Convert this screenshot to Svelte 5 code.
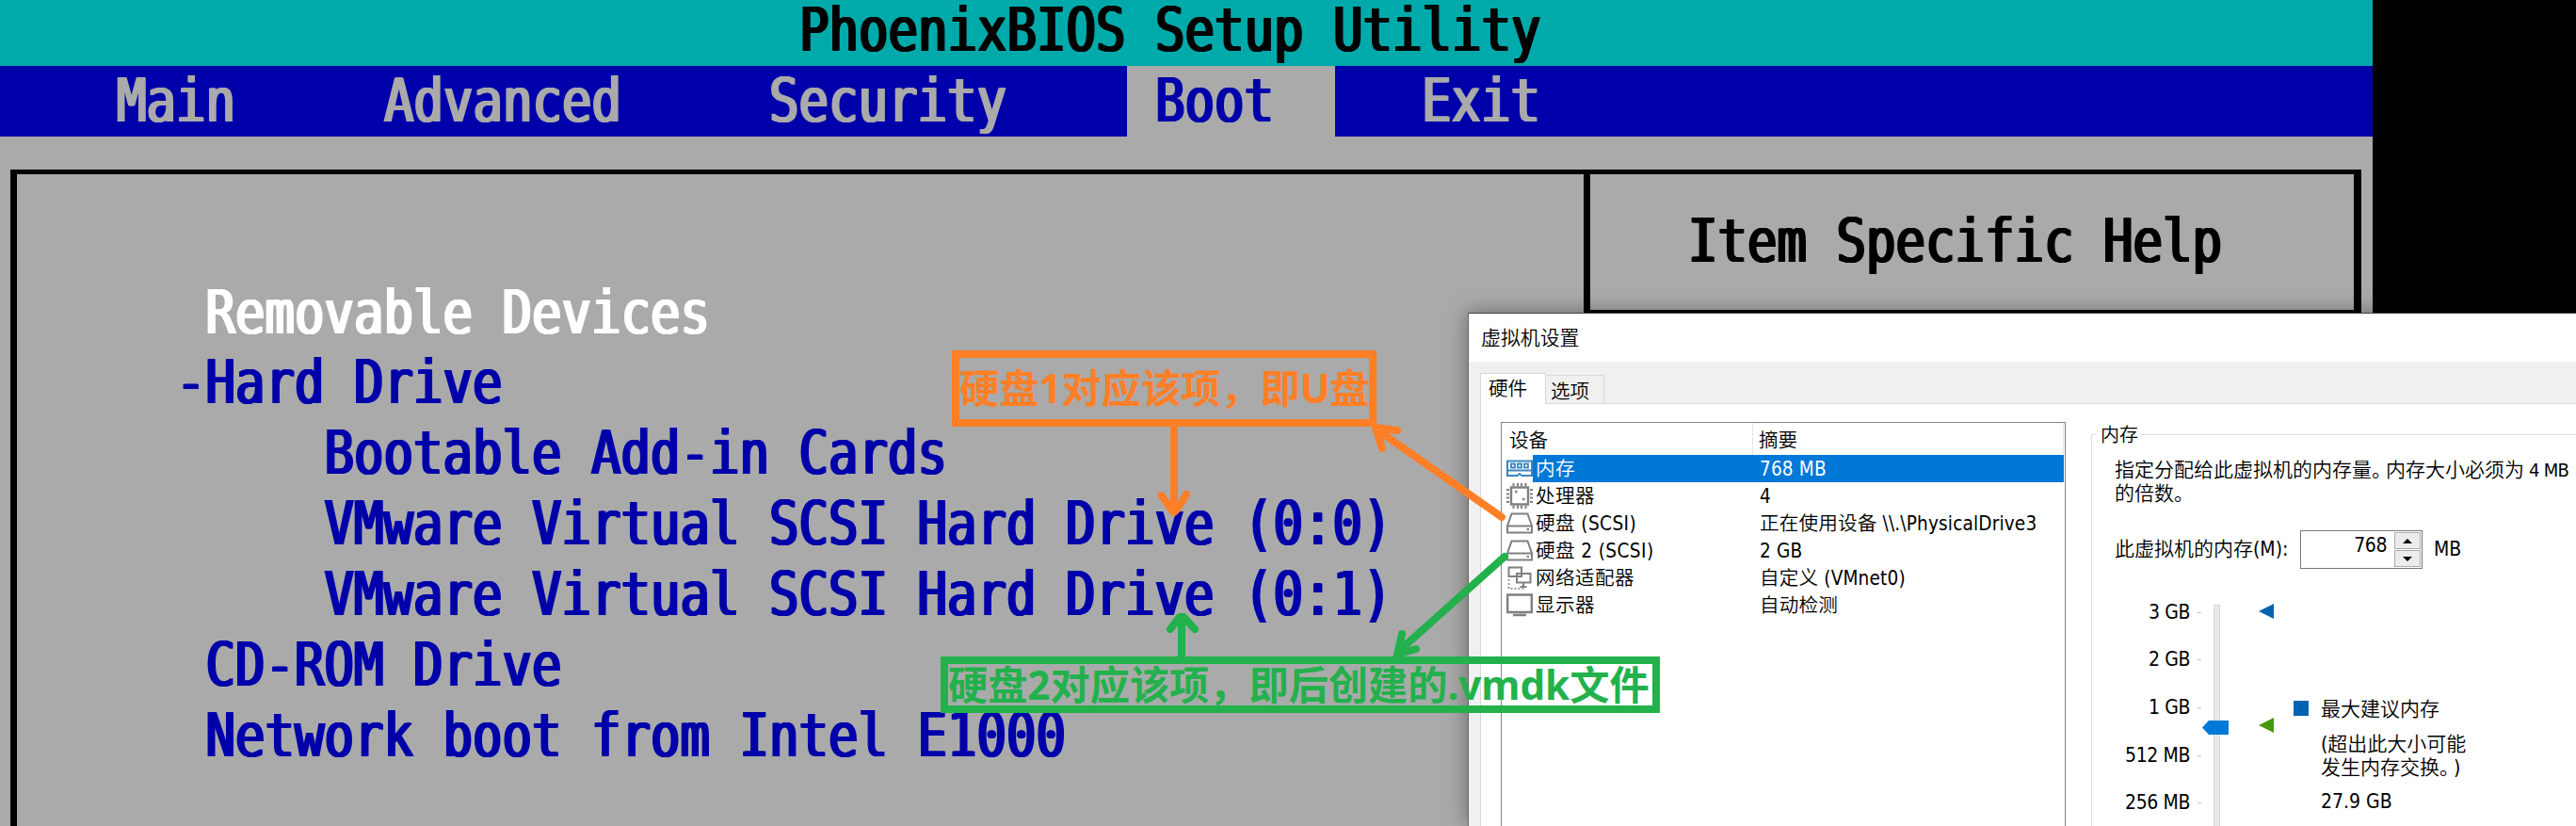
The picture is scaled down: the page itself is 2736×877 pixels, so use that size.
<script>
  const menu = [
    { label: 'Main', left: 4, width: 13 },
    { label: 'Advanced', left: 0, width: 13 },
    { label: 'Security', left: 0, width: 12 },
    { label: 'Boot', left: 1, width: 7, active: true },
    { label: 'Exit', left: 3, width: 10 }
  ];
  const boot = [
    { text: ' Removable Devices', on: true },
    { text: '-Hard Drive' },
    { text: '     Bootable Add-in Cards' },
    { text: '     VMware Virtual SCSI Hard Drive (0:0)' },
    { text: '     VMware Virtual SCSI Hard Drive (0:1)' },
    { text: ' CD-ROM Drive' },
    { text: ' Network boot from Intel E1000' }
  ];
  const devices = [
    { icon: 'mem', name: '内存', info: '768 MB', on: true },
    { icon: 'cpu', name: '处理器', info: '4' },
    { icon: 'disk', name: '硬盘 (SCSI)', info: '正在使用设备 \\\\.\\PhysicalDrive3' },
    { icon: 'disk', name: '硬盘 2 (SCSI)', info: '2 GB' },
    { icon: 'net', name: '网络适配器', info: '自定义 (VMnet0)' },
    { icon: 'mon', name: '显示器', info: '自动检测' }
  ];
  const scale = ['3 GB', '2 GB', '1 GB', '512 MB', '256 MB'];
</script>

<div class="stage">
  <div class="bios">
    <header><span class="t">PhoenixBIOS Setup Utility</span></header>
    <nav>
      {#each menu as m}
        <div class="item" class:active={m.active} style="width:{m.width * 31.5}px;padding-left:{m.left * 31.5}px">
          <span class="t">{m.label}</span>
        </div>
      {/each}
    </nav>
    <div class="frame">
      <div class="list">
        {#each boot as b}
          <div class="t" class:on={b.on}>{b.text}</div>
        {/each}
      </div>
      <div class="help"><div class="helphead"><span class="t">Item Specific Help</span></div></div>
    </div>
  </div>

  <section class="dialog">
    <div class="title">虚拟机设置</div>
    <div class="tabs">
      <div class="tab cur">硬件</div>
      <div class="tab">选项</div>
      <div class="rest"></div>
    </div>
    <div class="pane">
      <div class="table">
        <div class="thead"><span>设备</span><span>摘要</span></div>
        {#each devices as d}
          <div class="row" class:sel={d.on}>
            <svg class="ico" viewBox="0 0 28 29" fill="none" stroke="#808080" stroke-width="2">
              {#if d.icon === 'mem'}
                <g stroke="#3c85bd"><path d="M1 6.500H27V16.500H1ZM1 16.500V22H11.500L14 20L16.500 22H27V16.500" /><path d="M5 9.500H9V13.500H5ZM12 9.500H16V13.500H12ZM19 9.500H23V13.500H19Z" stroke-width="1.800" /></g>
              {:else if d.icon === 'cpu'}
                <path d="M5 5.500H23V23.500H5Z" stroke-width="2.400" />
                <path d="M7.500 1V4M12 1V4M16 1V4M20.500 1V4M7.500 25V28M12 25V28M16 25V28M20.500 25V28M0 8H3M0 12.500H3M0 16.500H3M0 21H3M25 8H28M25 12.500H28M25 16.500H28M25 21H28" />
                <path d="M9 10H11.500M17 18H19.500" stroke-width="2.600" />
              {:else if d.icon === 'disk'}
                <path d="M5.500 4.500H22.500L27 17.500V24.500H1V17.500ZM1 17.500H27M21.500 21H24" />
              {:else if d.icon === 'net'}
                <path d="M2.500 3.500H16V13H2.500ZM11 10H25.500V19.500H11ZM18 20V24M14.500 24H21.500" fill="#fff" />
                <path d="M2.500 16V26H19" stroke-dasharray="2 2" stroke-width="1.600" />
              {:else}
                <path d="M1.200 3.500H26.800V22H1.200ZM7 25H21" stroke-width="2.400" />
              {/if}
            </svg>
            <div class="cells"><span>{d.name}</span><span>{d.info}</span></div>
          </div>
        {/each}
      </div>

      <div class="group">
        <div class="legend"><i></i><b>内存</b><em></em></div>
        <div class="gbody">
          <p class="desc">指定分配给此虚拟机的内存量<span class="stop">。</span>内存大小必须为<span class="lat">4 MB</span><br />的倍数。</p>
          <div class="field">
            <label for="mem">此虚拟机的内存(M):</label>
            <div class="spin" id="mem">
              <span>768</span>
              <div class="btns">
                <div><svg viewBox="0 0 10 5"><path d="M0 5L5 0L10 5Z" /></svg></div>
                <div><svg viewBox="0 0 10 5"><path d="M0 0L5 5L10 0Z" /></svg></div>
              </div>
            </div>
            <span>MB</span>
          </div>
          <div class="meter">
            <div class="labels">
              {#each scale as s}<div><span>{s}</span><i></i></div>{/each}
            </div>
            <div class="track"><svg class="thumb" viewBox="0 0 28 15"><path d="M0 7.500L7 0H28V15H7Z" fill="#0078d7" /></svg></div>
            <div class="marks">
              <svg viewBox="0 0 16 16"><path d="M0 8L16 0V16Z" fill="#0063b1" /></svg>
              <svg viewBox="0 0 16 16"><path d="M0 8L16 0V16Z" fill="#46960c" /></svg>
            </div>
            <div class="advice">
              <div class="sq"></div>
              <div>
                <div class="a1">最大建议内存</div>
                <div class="a2">(超出此大小可能<br />发生内存交换<span class="stop">。</span>)</div>
                <div class="a3">27.9 GB</div>
              </div>
            </div>
          </div>
        </div>
      </div>
    </div>
  </section>

  <div class="note orange"><span>硬盘1对应该项，即U盘</span></div>
  <div class="note green"><span>硬盘2对应该项，即后创建的.vmdk文件</span></div>
  <svg class="arrows" viewBox="0 0 2736 877" fill="none" stroke-width="8" stroke-linecap="round" stroke-linejoin="round">
    <g stroke="#ff7f27">
      <path d="M1247 453V542M1233.500 526L1245 542L1247 544L1250 541L1260 525" />
      <path d="M1595 549L1465 458M1468 476L1461 454L1484 457" />
    </g>
    <g stroke="#22b14c">
      <path d="M1255 697V657M1243 668L1253 655H1257L1269 668" />
      <path d="M1598 591L1485 692M1489 673L1484 695L1504 689" />
    </g>
  </svg>
</div>

<style>
  :global(body) { margin: 0; background: #000; }
  .stage { position: relative; width: 2736px; height: 877px; overflow: hidden; background: #000; }
  .bios { width: 2520px; height: 877px; background: #aaa; display: flex; flex-direction: column; }
  .t {
    display: block; white-space: pre; font: 64.4px/74.9px "DejaVu Sans Mono", monospace;
    transform: scaleX(0.8125); transform-origin: 0 0; margin-left: -2px;
    text-shadow: 1.8px 0 currentColor, -1.8px 0 currentColor, 0.9px 0 currentColor, -0.9px 0 currentColor;
  }
  header { height: 69.500px; box-sizing: border-box; background: #00aaaa; color: #000; padding-left: 850.500px; flex: none; }
  header .t { line-height: 64px; }
  nav { height: 75px; background: #0000aa; color: #aaa; display: flex; flex: none; }
  .item { box-sizing: border-box; height: 75px; flex: none; }
  .item .t { width: 0; }
  .active { background: #aaa; color: #0000aa; }
  .frame { margin: 35.500px 12px 0 11px; flex: 1; border: solid #000; border-width: 5px 8px 0 7px; display: flex; }
  .list { width: 1664px; flex: none; padding: 109.500px 0 0 171px; box-sizing: border-box; color: #0000aa; }
  .list .t { width: 0; }
  .list .on { color: #fff; }
  .help { flex: 1; border-left: 7px solid #000; }
  .helphead { height: 149px; border-bottom: 5px solid #000; padding: 34px 0 0 106px; box-sizing: border-box; }
  .helphead .t { width: 0; }

  .dialog {
    position: absolute; left: 1559px; top: 332px; width: 1177px; height: 545px; box-sizing: border-box;
    border-top: 1px solid #444; border-left: 1px solid #666; background: #f0f0f0;
    box-shadow: 0 0 22px rgba(0, 0, 0, 0.4); color: #000;
    font: 350 20.600px/25px "DejaVu Sans Condensed", "Noto Sans", "Noto Sans CJK SC", sans-serif;
    white-space: nowrap; text-spacing-trim: space-all;
    display: flex; flex-direction: column;
  }
  .title { height: 51px; background: #fff; padding-left: 13px; line-height: 53px; flex: none; font-size: 20.900px; }
  .tabs { height: 45px; display: flex; align-items: flex-end; padding-left: 12px; flex: none; }
  .tab { box-sizing: border-box; width: 62px; height: 31px; border: 1px solid #d9d9d9; border-left: 0; padding-left: 5px; line-height: 34px; }
  .cur { width: 70px; height: 33px; background: #fff; border: 1px solid #d9d9d9; border-bottom: 0; padding-left: 8px; line-height: 32px; }
  .rest { flex: 1; border-bottom: 1px solid #d9d9d9; }
  .pane { flex: 1; margin-left: 12px; border-left: 1px solid #d9d9d9; background: #fff; display: flex; padding-top: 19px; }
  .table { width: 600px; box-sizing: border-box; margin-left: 21px; flex: none; border: 1px solid #828790; border-bottom: 0; }
  .thead { display: flex; height: 34px; line-height: 38px; margin-right: 1px; border-right: 1px solid #e5e5e5; }
  .thead span:first-child { width: 258px; padding-left: 8px; border-right: 1px solid #e5e5e5; }
  .thead span:last-child { padding-left: 6px; }
  .row { display: flex; height: 29.100px; }
  .ico { width: 28px; height: 29px; margin-left: 5px; flex: none; }
  .cells { flex: 1; display: flex; line-height: 31px; padding-left: 3px; margin-right: 1px; letter-spacing: 0.150px; }
  .cells span:first-child { width: 238px; letter-spacing: 0.400px; }
  .sel .cells { background: #0078d7; color: #fff; }
  .labels span, .spin span { letter-spacing: -0.400px; }

  .group { flex: 1; margin: 1px 0 0 27px; display: flex; flex-direction: column; font-size: 21px; }
  .legend { height: 24px; display: flex; align-items: stretch; margin-bottom: -12px; position: relative; }
  .legend b { font-weight: 350; font-size: 20px; padding: 0 2px 0 3px; line-height: 26px; }
  .legend i { width: 7px; border-top: 1px solid #dcdcdc; margin-top: 12px; }
  .legend em { flex: 1; border-top: 1px solid #dcdcdc; margin-top: 12px; }
  .gbody { flex: 1; border-left: 1px solid #dcdcdc; padding: 26px 0 0 24px; }
  .desc { margin: 0; line-height: 25px; }
  .desc .lat { font-size: 20px; letter-spacing: -0.700px; margin-left: 5px; }
  .stop { letter-spacing: -6px; }
  .field { display: flex; align-items: center; margin-top: 26px; height: 41px; }
  .field label { width: 197px; }
  .spin { width: 130px; height: 41px; box-sizing: border-box; border: 1px solid #7a7a7a; display: flex; justify-content: flex-end; margin-right: 12px; }
  .spin span { line-height: 31px; margin-right: 7px; }
  .btns { width: 28px; margin: 1px; display: flex; flex-direction: column; gap: 1px; }
  .btns div { flex: 1; border: 1px solid #acacac; background: #ececec; display: flex; align-items: center; justify-content: center; }
  .btns svg { width: 10px; height: 5px; }
  .meter { display: flex; margin-top: 21px; height: 253px; }
  .labels { width: 92px; }
  .labels div { height: 50.650px; line-height: 51px; display: flex; justify-content: flex-end; align-items: center; gap: 8px; }
  .labels i { width: 4px; height: 1px; background: #c4c4c4; }
  .track { position: relative; box-sizing: border-box; width: 7px; margin: 17px 0 0 13px; border: 1px solid #d6d6d6; background: #e7eaea; }
  .thumb { position: absolute; left: -13px; top: 122px; width: 28px; height: 15px; }
  .marks { margin: 16px 0 0 41px; width: 16px; display: flex; flex-direction: column; gap: 105px; }
  .marks svg { width: 16px; height: 16px; flex: none; }
  .advice { display: flex; gap: 13px; margin: 116px 0 0 21px; }
  .sq { width: 16px; height: 16px; background: #0063b1; margin-top: 3px; }
  .a2 { margin-top: 12px; }
  .a3 { margin-top: 11px; }

  .note { position: absolute; box-sizing: border-box; border: 8px solid; font: 700 42.200px/44px "Noto Sans", "Noto Sans CJK SC", sans-serif; white-space: nowrap; }
  .orange { left: 1011px; top: 372px; width: 451px; height: 81px; color: #ff7f27; border-color: #ff7f27; padding-top: 10px; }
  .green { left: 999px; top: 697px; width: 764px; height: 60px; color: #22b14c; border-color: #22b14c; }
  .arrows { position: absolute; inset: 0; width: 2736px; height: 877px; }
</style>
